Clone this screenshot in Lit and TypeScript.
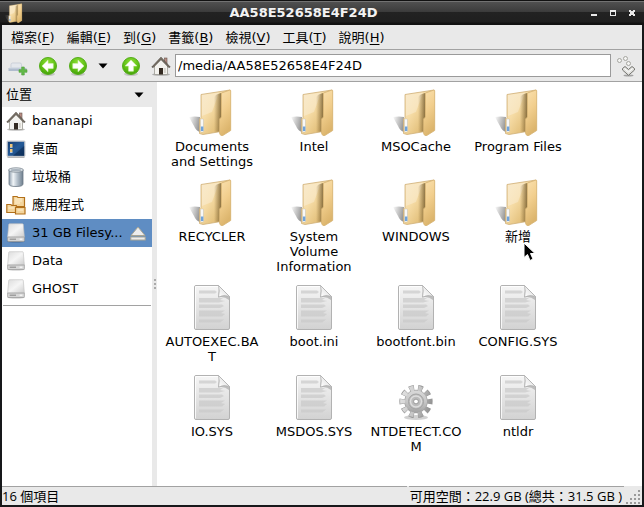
import { LitElement, html, svg, css, nothing } from "lit";
import { customElement, property } from "lit/decorators.js";
import { classMap } from "lit/directives/class-map.js";

type Kind = "folder" | "text" | "gear";

const menus: [string, string][] = [
  ["檔案", "F"], ["編輯", "E"], ["到", "G"], ["書籤", "B"],
  ["檢視", "V"], ["工具", "T"], ["說明", "H"],
];

const places: { name: string; icon: string; selected?: boolean }[] = [
  { name: "bananapi", icon: "home" },
  { name: "桌面", icon: "desktop" },
  { name: "垃圾桶", icon: "trash" },
  { name: "應用程式", icon: "apps" },
  { name: "31 GB Filesy...", icon: "drive", selected: true },
  { name: "Data", icon: "drive" },
  { name: "GHOST", icon: "drive" },
];

const files: { name: string; kind: Kind; hover?: boolean }[] = [
  { name: "Documents and Settings", kind: "folder" },
  { name: "Intel", kind: "folder" },
  { name: "MSOCache", kind: "folder" },
  { name: "Program Files", kind: "folder" },
  { name: "RECYCLER", kind: "folder" },
  { name: "System Volume Information", kind: "folder" },
  { name: "WINDOWS", kind: "folder" },
  { name: "新增", kind: "folder", hover: true },
  { name: "AUTOEXEC.BAT", kind: "text" },
  { name: "boot.ini", kind: "text" },
  { name: "bootfont.bin", kind: "text" },
  { name: "CONFIG.SYS", kind: "text" },
  { name: "IO.SYS", kind: "text" },
  { name: "MSDOS.SYS", kind: "text" },
  { name: "NTDETECT.COM", kind: "gear" },
  { name: "ntldr", kind: "text" },
];

const stop = (o: number, c: string, a = 1) =>
  svg`<stop offset=${o} stop-color=${c} stop-opacity=${a}></stop>`;

const disc = svg`
  <defs><radialGradient id="g" cx=".5" cy=".3" r=".75">${stop(0, "#8ede3a")}${stop(0.6, "#5fc013")}${stop(1, "#3f9a06")}</radialGradient></defs>
  <ellipse cx="10" cy="18" rx="7" ry="2" fill="#000" opacity=".15"></ellipse>
  <circle cx="10" cy="10" r="8.500" fill="url(#g)" stroke="#55ad1c"></circle>`;

const arrow = (deg: number) => svg`${disc}
  <path transform="rotate(${deg} 10 10)" d="M4 10 L10 4.200 V7.600 H15.200 V12.400 H10 V15.800 Z" fill="#fff" stroke="#d6f2bd" stroke-width=".6" stroke-linejoin="round"></path>`;

const icons: Record<string, [string, unknown]> = {
  folder: ["0 0 48 48", svg`
    <defs>
      <linearGradient id="b" x1="0" y1="0" x2="1" y2=".9">${stop(0, "#f7e3bd")}${stop(0.4, "#f6dca6")}${stop(0.75, "#e3c07b")}${stop(1, "#d4ae68")}</linearGradient>
      <linearGradient id="f" x1="0" y1="0" x2=".3" y2="1">${stop(0, "#fae1b0")}${stop(0.5, "#f2cf8e")}${stop(1, "#dcb56d")}</linearGradient>
      <linearGradient id="s" x1="0" y1="0" x2="1" y2=".3">${stop(0, "#555", 0)}${stop(0.6, "#666", 0.4)}${stop(1, "#555", 0.6)}</linearGradient>
      <linearGradient id="k" x1="0" y1="0" x2="1" y2="0">${stop(0, "#6e5426", 0)}${stop(1, "#5c451c", 0.65)}</linearGradient>
    </defs>
    <path d="M1 29 Q7 28 12 29 V44 Q8 43 6 38 Q3 33 1 29Z" fill="url(#s)"></path>
    <path d="M11.500 31 L13 29.500 V6.500 L42 2 V42 L15 46.500 L11.500 45.500 Z" fill="url(#b)" stroke="#cfb078" stroke-width=".8" stroke-linejoin="round"></path>
    <path d="M14 7 L31 4.500 L24 24 L14 28 Z" fill="#fff" opacity=".28"></path>
    <path d="M26 9 Q28 6 33 5 V45 L31 43.500 L26 44 Z" fill="url(#k)"></path>
    <path d="M33.500 5 L42 2 Q42.700 2 42.700 3 V42.500 L34 48 Q32 47.500 31.500 45 V31 L33.500 29 Z" fill="url(#f)" stroke="#d6b272" stroke-width=".8" stroke-linejoin="round"></path>
    <rect x="12.500" y="31" width="3" height="13" rx=".6" fill="#f8f8f8" stroke="#b9b3a4" stroke-width=".4"></rect>
    <rect x="12.900" y="38.500" width="2.400" height="4.500" fill="#6fa3dc"></rect>`],
  text: ["0 0 48 48", svg`
    <defs>
      <linearGradient id="p" x1="0" y1="0" x2="0" y2="1">${stop(0, "#f6f6f6")}${stop(1, "#d2d2d2")}</linearGradient>
      <linearGradient id="c" x1="0" y1="1" x2="1" y2="0">${stop(0, "#fff")}${stop(0.6, "#e8e8e8")}${stop(1, "#c4c4c4")}</linearGradient>
    </defs>
    <path d="M8 2.500 H30.500 L41.500 13.500 V45 Q41.500 46.500 40 46.500 H8 Q6.500 46.500 6.500 45 V4 Q6.500 2.500 8 2.500Z" fill="url(#p)" stroke="#b2b2b2"></path>
    <path d="M7.500 45.500 V3.500 H30" fill="none" stroke="#fff" opacity=".8"></path>
    <path fill="#c9c9c9" opacity=".7" d="M11 7.500H27L29 9L27 10.500H11zM11 15H35L32 17L37 18L31 19.500H11zM11 21.500H34L36 23L32 25H11zM11 27.500H37L33 30L37 31L34 33.500H11zM11 36.500H36L32 39.500H11z"></path>
    <path d="M30 14.500 Q36 13 41 17 V14 L31 4Z" fill="#777" opacity=".4"></path>
    <path d="M30.500 2.500 L41.500 13.500 Q36 11.500 30.500 14 Q32 8 30.500 2.500Z" fill="url(#c)" stroke="#b0b0b0" stroke-width=".8"></path>`],
  gear: ["0 0 48 48", svg`
    <defs><linearGradient id="m" gradientUnits="userSpaceOnUse" x1="0" y1="12" x2="0" y2="46">${stop(0, "#e2e2e2")}${stop(0.5, "#c6c6c6")}${stop(1, "#8c8c8c")}</linearGradient></defs>
    <ellipse cx="24" cy="44.500" rx="12" ry="2.500" fill="#000" opacity=".18"></ellipse>
    <circle cx="24" cy="28.500" r="13.500" fill="none" stroke="#999" stroke-width="6.400" pathLength="100" stroke-dasharray="5.600 4.400" stroke-dashoffset="2.800" transform="rotate(-72 24 28.500)"></circle>
    <circle cx="24" cy="28.500" r="11.700" fill="#a2a2a2"></circle>
    <circle cx="24" cy="28.500" r="13.300" fill="none" stroke="url(#m)" stroke-width="5.200" pathLength="100" stroke-dasharray="4.600 5.400" stroke-dashoffset="2.300" transform="rotate(-72 24 28.500)"></circle>
    <circle cx="24" cy="28.500" r="11" fill="url(#m)"></circle>
    <circle cx="24" cy="28.500" r="7.500" fill="#bcbcbc" stroke="#a4a4a4"></circle>
    <circle cx="24" cy="28.500" r="5.500" fill="none" stroke="#dedede" stroke-width="1.400"></circle>
    <circle cx="24" cy="28.500" r="2.400" fill="#fff" stroke="#999"></circle>`],
  home: ["0 0 20 20", svg`
    <ellipse cx="10" cy="18.500" rx="9" ry="1.300" fill="#000" opacity=".25"></ellipse>
    <rect x="13.500" y="2" width="2.500" height="6" fill="#b98d85" stroke="#66564c" stroke-width=".6"></rect>
    <path d="M3.500 9.500 L10 3 L16.500 9.500 V18.500 H3.500Z" fill="#f4f3ef" stroke="#9c9a93" stroke-width=".8"></path>
    <path d="M.8 11 L10 1.200 L19.200 11 L17.800 11.500 L10 3.600 L2.200 11.500Z" fill="#7b7367" stroke="#4a453e" stroke-width=".7" stroke-linejoin="round"></path>
    <rect x="8" y="12" width="4" height="6.500" fill="#342b22"></rect>
    <path d="M12.800 12h2v5h-2z" fill="#d6d4cd"></path>`],
  desktop: ["0 0 20 20", svg`
    <defs><linearGradient id="d" x1="0" y1="0" x2="1" y2="1">${stop(0, "#173e72")}${stop(0.5, "#245a98")}${stop(1, "#123766")}</linearGradient></defs>
    <path d="M2 18h16l1 1H1z" fill="#888" opacity=".6"></path>
    <rect x="1" y="2" width="18" height="15.500" rx=".8" fill="#d8dbdf" stroke="#a4a8ae" stroke-width=".6"></rect>
    <rect x="1.800" y="2.800" width="16.400" height="14" fill="url(#d)"></rect>
    <path d="M7 16.800 L18.200 7 V16.800Z" fill="#0c2b54" opacity=".6"></path>
    <path d="M4 5h2.500v3H4zM4 10h2.500v3H4z" fill="#ecc57a"></path>
    <path d="M4 8.200h2.500v.8H4zM4 13.200h2.500v.8H4z" fill="#dce6f2"></path>`],
  trash: ["0 0 20 20", svg`
    <defs><linearGradient id="t" x1="0" y1="0" x2="1" y2="0">${stop(0, "#8c9cab")}${stop(0.3, "#f1f5f8")}${stop(0.6, "#b4c0cb")}${stop(1, "#6f7f8e")}</linearGradient></defs>
    <path d="M3 3 V17 Q3 19.500 10 19.500 T17 17 V3Z" fill="url(#t)" stroke="#6d7a86" stroke-width=".8"></path>
    <ellipse cx="10" cy="3" rx="7.500" ry="2.200" fill="#dfe5ea" stroke="#7b8791" stroke-width=".8"></ellipse>
    <ellipse cx="10" cy="3.200" rx="5.500" ry="1.100" fill="#a8b3bd"></ellipse>`],
  apps: ["0 0 20 20", svg`
    <g fill="#f3d59d" stroke="#b2701a" stroke-width="1.200">
      <path d="M7 1.500h4l1 1h6.500v9H7z"></path><path d="M.8 9.500h4l1 1h4.500v7H.8z"></path><path d="M9.500 12.500h9.500v6.500H9.500z"></path>
    </g>
    <path d="M9 4h7M9 6h7M9 8h5M2.500 13h6M11.500 15h5.500" stroke="#fff0cf"></path>`],
  drive: ["0 0 20 22", svg`
    <defs><linearGradient id="v" x1="0" y1="0" x2="1" y2="1">${stop(0, "#dcdcdc")}${stop(0.5, "#f5f5f5")}${stop(1, "#cdcdcd")}</linearGradient></defs>
    <ellipse cx="10" cy="20.300" rx="9.500" ry="1.200" fill="#000" opacity=".25"></ellipse>
    <path d="M2 1.500 Q2.100 .8 3 .8H17Q17.900 .8 18 1.500L19.200 15.500H.8Z" fill="url(#v)" stroke="#c2c2c2" stroke-width=".7"></path>
    <path d="M.8 15.500H19.200V19.500Q19.200 20.300 18.200 20.300H1.800Q.8 20.300 .8 19.500Z" fill="#d7d7d7" stroke="#999" stroke-width=".8"></path>
    <path d="M3 17.800h7" stroke="#8a8a8a" stroke-width="1.200"></path><path d="M14 17.800h3" stroke="#fff" stroke-width="1.200"></path>`],
  eject: ["0 0 16 15", svg`
    <path d="M8 1 L15 9.500H1Z" fill="#ededed" stroke="#a9a594" stroke-linejoin="round"></path>
    <rect x=".8" y="11" width="14.400" height="3" fill="#ededed" stroke="#a9a594"></rect>`],
  newtab: ["0 0 20 20", svg`
    <path d="M3 8.500 Q3 7 4.500 7H12Q13.500 7 13.500 8.500V12H3z" fill="#e4e7ec" stroke="#c1c7d2" stroke-width=".7"></path>
    <path d="M.5 12h18v3H.5z" fill="#b0bccd"></path><path d="M1 11.500h14v1H1z" fill="#d5dce6"></path>
    <path d="M13.700 11h2.600v2.700h2.700v2.600h-2.700v2.700h-2.600v-2.700h-2.700v-2.600h2.700z" fill="#63b948" stroke="#4f9f3b" stroke-width=".6"></path>`],
  back: ["0 0 20 20", arrow(0)],
  forward: ["0 0 20 20", arrow(180)],
  up: ["0 0 20 20", arrow(90)],
  caret: ["0 0 10 6", svg`<path d="M.5 .5H9.500L5 5.500Z" fill="#000"></path>`],
  go: ["0 0 20 22", svg`
    <ellipse cx="12.500" cy="20.500" rx="5" ry="1" fill="#000" opacity=".3"></ellipse>
    <g fill="#f4f4f2" stroke="#a5a5a0"><circle cx="3.500" cy="5.500" r="2"></circle><circle cx="9.500" cy="3.500" r="2"></circle><circle cx="12.500" cy="8.500" r="2"></circle></g>
    <path d="M6.500 13.500 L9 11.500 L12.500 14.500 L16 11.500 L18.500 13.500 V15 L12.500 20.300 L6.500 15Z" fill="#e2e2df" stroke="#73736e" stroke-linejoin="round"></path>
    <path d="M8.500 13.500 L12.500 17 L16.500 13.500" fill="none" stroke="#fff"></path>`],
  pointer: ["0 0 14 20", svg`<path d="M1 1V15.500L4.500 12.500L7 18.500L10 17L7.500 11.500H12Z" fill="#000" stroke="#fff" stroke-linejoin="round"></path>`],
  minimize: ["0 0 7 7", svg`<path d="M0 5h6v2H0z" fill="#e8e8e8"></path>`],
  maximize: ["0 0 7 7", svg`<path d="M0 1h6v6H0zM1 3v3h4V3z" fill="#e8e8e8" fill-rule="evenodd"></path>`],
  close: ["0 0 7 7", svg`<path d="M0 1h2v1h2V1h2v2H5v2h1v2H4V6H2v1H0V5h1V3H0z" fill="#e8e8e8"></path>`],
  grip: ["0 0 18 18", svg`<path d="M2 16h14M6 12h10M10 8h6M14 4h2" stroke="#9a9a9a" stroke-width="2" stroke-dasharray="2 2"></path>`],
};

@customElement("fm-icon")
export class FmIcon extends LitElement {
  @property() name = "";
  static styles = css`
    :host { display: block; flex: none; width: 20px; height: 20px; }
    svg { display: block; width: 100%; height: 100%; }
  `;
  render() {
    const [box, body] = icons[this.name];
    return html`<svg viewBox=${box} aria-hidden="true">${body}</svg>`;
  }
}

@customElement("app-root")
export class AppRoot extends LitElement {
  static styles = css`
    :host {
      display: flex; flex-direction: column; box-sizing: border-box; min-height: 100vh;
      border: solid #17181a; border-width: 0 2px 2px;
      background: #e9e9e9; color: #000;
      font: 13px/15px "DejaVu Sans", "Noto Sans CJK TC", sans-serif;
    }
    button { font: inherit; color: inherit; background: none; border: 0; margin: 0; padding: 0; text-align: left; }
    .titlebar {
      display: flex; align-items: center; height: 25px; margin: 0 -2px; padding: 0 8px 0 4px; box-sizing: border-box;
      background: linear-gradient(#111 0 1px, #727272 1px 2px, #505050 2px, #3b3b3b 12px, #222 12px, #1f1f1f 22px, #121212 23px);
      color: #f2f2f2;
    }
    .titlebar fm-icon { width: 20px; height: 20px; }
    .title { flex: 1; margin: 0; padding-right: 8px; font-size: 13px; line-height: 15px; font-weight: bold; text-align: center; }
    .titlebar .controls { display: flex; gap: 12px; }
    .titlebar .controls fm-icon { width: 7px; height: 7px; }
    .menubar { display: flex; gap: 12px; height: 24px; padding: 0 9px; align-items: center; border-bottom: 1px solid #a2a2a2; }
    .menubar button { white-space: nowrap; }
    .key { text-decoration: underline; text-underline-offset: 2px; }
    .toolbar { display: flex; align-items: center; gap: 10px; height: 31px; padding: 0 6px; border-bottom: 1px solid #a2a2a2; }
    .history { display: flex; align-items: center; gap: 10px; margin-right: 3px; }
    .caret { width: 10px; height: 6px; }
    .path {
      flex: 1; min-width: 0; height: 23px; box-sizing: border-box; margin-left: -6px; padding: 0 2px;
      border: 1px solid #9a9a9a; background: #fff; font: inherit; color: inherit; outline: 0;
    }
    .go { height: 22px; margin-left: -5px; }
    .body { display: flex; flex: 1; }
    .side { display: flex; flex-direction: column; width: 150px; flex: none; }
    .side-head { display: flex; align-items: center; justify-content: space-between; height: 25px; padding: 0 8px 0 4px; }
    .places { flex: 1; margin: 0; padding: 0; list-style: none; background: #fff; }
    .places li { display: flex; align-items: center; height: 28px; padding: 0 6px 0 4px; }
    .places .selected { background: #5f8dc3; }
    .place { display: flex; align-items: center; gap: 6px; flex: 1; min-width: 0; }
    .place span { white-space: nowrap; line-height: 20px; }
    .eject { width: 16px; height: 15px; }
    .places .rule { height: 1px; margin: 2px 1px 0; padding: 0; background: #a2a2a2; }
    .splitter { display: flex; flex-direction: column; justify-content: center; align-items: center; gap: 2px; width: 5px; flex: none; }
    .splitter i { width: 2px; height: 2px; background: #aaa; }
    .files {
      flex: 1; display: grid; grid-template-columns: repeat(auto-fill, 102px); align-content: start;
      row-gap: 9px; padding: 6px 0 9px 4px; background: #fff;
    }
    .file { position: relative; display: flex; flex-direction: column; align-items: center; gap: 3px; }
    .file .icon { width: 48px; height: 48px; }
    .name { width: 94px; text-align: center; overflow-wrap: anywhere; }
    .pointer { position: absolute; left: 56px; top: 64px; width: 14px; height: 20px; }
    .status {
      display: flex; gap: 2px; height: 19px;
      background: linear-gradient(to right, #a2a2a2, #a2a2a2) 0 0 / 0 0 no-repeat;
      font: 13px/18px "Open Sans", "Noto Sans CJK TC", sans-serif;
    }
    .status span { border-top: 1px solid #a2a2a2; }
    .count { flex: 1; }
    .status .grip { width: 18px; height: 18px; margin: 1px 0 0 -2px; }
    .free { padding: 0 2px 0 1px; }
  `;

  render() {
    return html`
      <header class="titlebar">
        <fm-icon name="folder"></fm-icon>
        <h1 class="title">AA58E52658E4F24D</h1>
        <div class="controls">
          ${["minimize", "maximize", "close"].map((n) => html`<button aria-label=${n}><fm-icon name=${n}></fm-icon></button>`)}
        </div>
      </header>
      <nav class="menubar">
        ${menus.map(([t, k]) => html`<button>${t}(<span class="key">${k}</span>)</button>`)}
      </nav>
      <div class="toolbar">
        <div class="history">
          <button aria-label="新分頁"><fm-icon name="newtab"></fm-icon></button>
          <button aria-label="上一頁"><fm-icon name="back"></fm-icon></button>
          <button aria-label="下一頁"><fm-icon name="forward"></fm-icon></button>
          <button aria-label="瀏覽紀錄"><fm-icon class="caret" name="caret"></fm-icon></button>
        </div>
        <button aria-label="上層"><fm-icon name="up"></fm-icon></button>
        <button aria-label="家目錄"><fm-icon name="home"></fm-icon></button>
        <input class="path" aria-label="路徑" value="/media/AA58E52658E4F24D" />
        <button aria-label="前往"><fm-icon class="go" name="go"></fm-icon></button>
      </div>
      <div class="body">
        <aside class="side">
          <button class="side-head">位置<fm-icon class="caret" name="caret"></fm-icon></button>
          <ul class="places">
            ${places.map((p) => html`
              <li class=${classMap({ selected: !!p.selected })}>
                <button class="place"><fm-icon name=${p.icon}></fm-icon><span>${p.name}</span></button>
                ${p.selected ? html`<button aria-label="退出"><fm-icon class="eject" name="eject"></fm-icon></button>` : nothing}
              </li>`)}
            <li class="rule" role="separator"></li>
          </ul>
        </aside>
        <div class="splitter"><i></i><i></i><i></i></div>
        <main class="files">
          ${files.map((f) => html`
            <button class="file">
              <fm-icon class="icon" name=${f.kind}></fm-icon>
              <span class="name">${f.name}</span>
              ${f.hover ? html`<fm-icon class="pointer" name="pointer"></fm-icon>` : nothing}
            </button>`)}
        </main>
      </div>
      <footer class="status">
        <span class="count">16 個項目</span>
        <span class="free">可用空間：22.9 GB (總共：31.5 GB )</span>
        <fm-icon class="grip" name="grip"></fm-icon>
      </footer>
    `;
  }
}
